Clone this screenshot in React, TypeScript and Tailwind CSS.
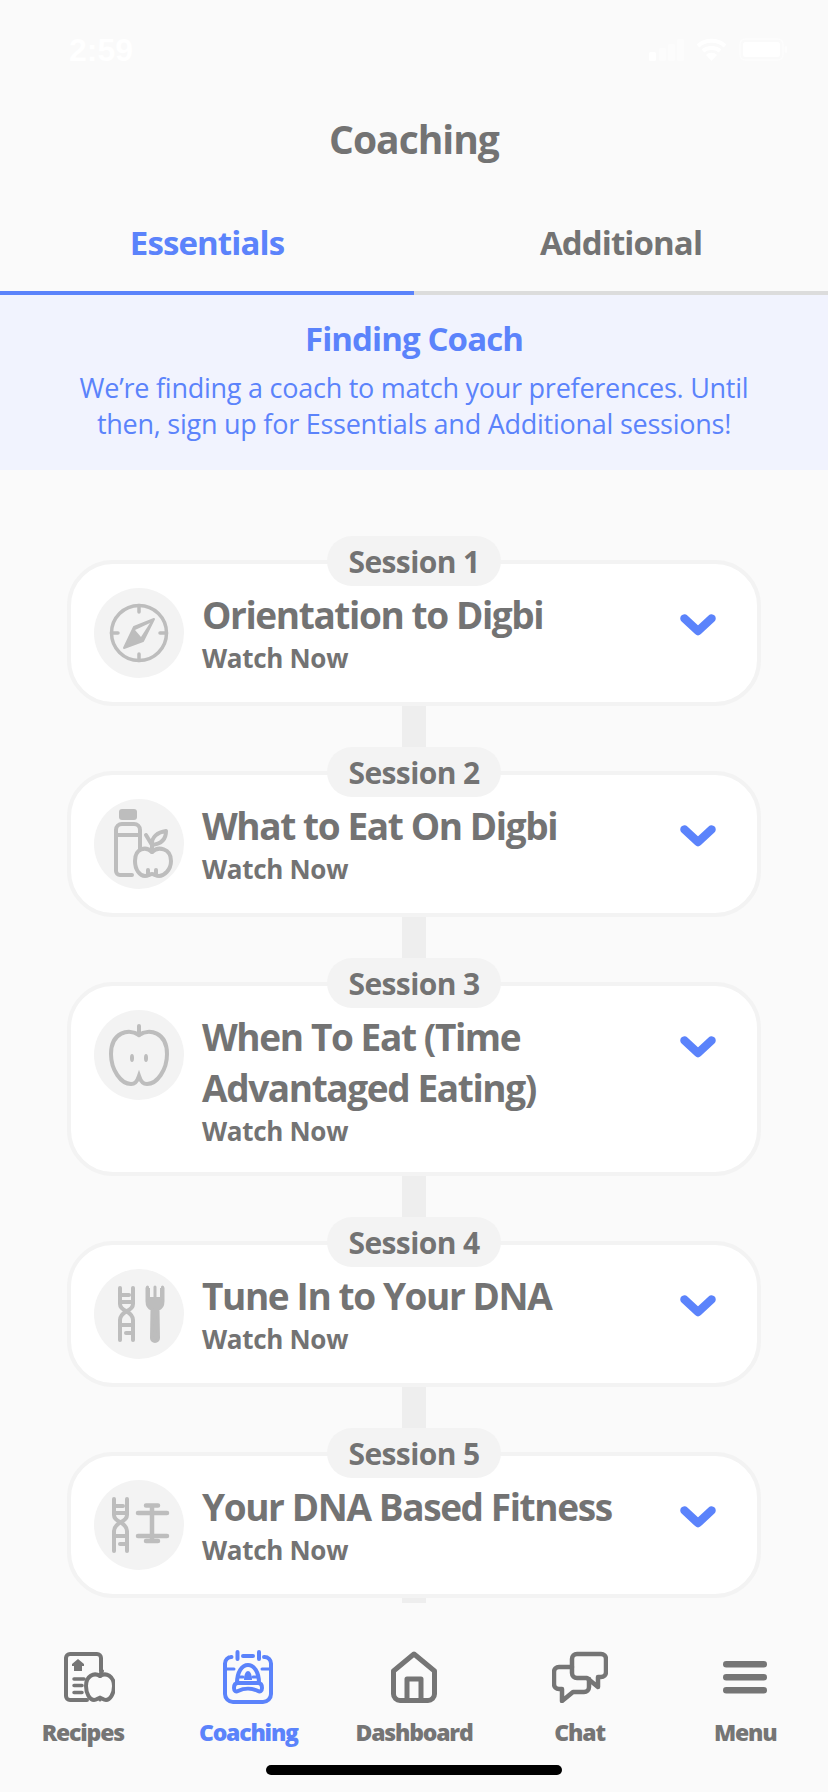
import React from 'react';

const Compass = () => (
  <svg width="90" height="90" viewBox="0 0 90 90" fill="none" stroke="#bdbdbd" strokeWidth="3.5" strokeLinecap="round">
    <circle cx="45" cy="45" r="27.5" />
    <path d="M45 17.5V24M45 66V72.5M17.5 45H24M66 45H72.5" />
    <path d="M60 31L49 53L30 60L40 39Z" fill="#bdbdbd" stroke="#bdbdbd" strokeWidth="2" strokeLinejoin="round" />
    <path d="M56 35L41 42L47 49Z" fill="#f3f3f3" stroke="none" />
  </svg>
);

const BottleApple = () => (
  <svg width="90" height="90" viewBox="0 0 90 90" fill="none" stroke="#bdbdbd" strokeWidth="4" strokeLinecap="round" strokeLinejoin="round">
    <rect x="25" y="10" width="18" height="11" rx="3" fill="#bdbdbd" stroke="none" />
    <path d="M38 76H26a4 4 0 0 1-4-4V31a6 6 0 0 1 6-6H40a6 6 0 0 1 6 6V50M22 36H46" />
    <path d="M58 53C52 47 41 49 41 62C41 71 46 77 51 77C54 77 56 75 58 75C60 75 62 77 65 77C70 77 77 71 77 62C77 49 64 47 58 53Z" fill="#f3f3f3" />
    <path d="M58 53V46M54 71L54 76M62 71V76" />
    <path d="M58 46C57 38 64 33 72 32C72 40 67 45 58 46ZM58 46L52 36" />
  </svg>
);

const AppleHalf = () => (
  <svg width="90" height="90" viewBox="0 0 90 90" fill="none" stroke="#bdbdbd" strokeWidth="4" strokeLinecap="round">
    <path d="M45 25C35 18 17 22 17 44C17 60 27 74 37 74C41 74 43 72 45 66C47 72 49 74 53 74C63 74 73 60 73 44C73 22 55 18 45 25Z" />
    <path d="M45 25V16" strokeWidth="4" />
    <ellipse cx="38" cy="48" rx="2" ry="4" fill="#bdbdbd" stroke="none" />
    <ellipse cx="52" cy="48" rx="2" ry="4" fill="#bdbdbd" stroke="none" />
  </svg>
);

const Dna = ({ x }: { x: number }) => (
  <g transform={`translate(${x} 18)`} stroke="#bdbdbd" strokeWidth="4" strokeLinecap="round" fill="none">
    <path d="M2 1V17Q2 21 8 24Q15 28 15 33V53" />
    <path d="M15 1V17Q15 21 9 24Q2 28 2 33V53" />
    <path d="M2 8H11M2 15H15M2 38H15M8 46H15" />
  </g>
);

const DnaFork = () => (
  <svg width="90" height="90" viewBox="0 0 90 90" fill="none">
    <Dna x={24} />
    <path d="M53 19V32Q53 39 58 40L57.5 69a3.5 3.5 0 0 0 7 0L64 40Q69 39 69 32V19" stroke="#bdbdbd" strokeWidth="3" fill="#bdbdbd" strokeLinecap="round" />
    <path d="M56 18H66V28H56Z" fill="#f3f3f3" />
    <path d="M53.500 18V30M61 18V30M68.500 18V30" stroke="#bdbdbd" strokeWidth="3" strokeLinecap="round" />
  </svg>
);

const DnaDumbbell = () => (
  <svg width="90" height="90" viewBox="0 0 90 90" fill="none">
    <Dna x={18} />
    <path d="M44 33H73M44 56H73M52 25.500H64M52 61H64M58 25.500V61" stroke="#bdbdbd" strokeWidth="4.500" strokeLinecap="round" />
  </svg>
);

const RecipesIcon = () => (
  <svg width="64" height="52" viewBox="-12 0 64 52" fill="none" stroke="#757575" strokeWidth="4" strokeLinecap="round" strokeLinejoin="round">
    <path d="M24 49H7a4 4 0 0 1-4-4V7a4 4 0 0 1 4-4H34a4 4 0 0 1 4 4V20" />
    <path d="M15 8L21 13V15H19V20H11V15H9V13Z" fill="#757575" stroke="none" />
    <path d="M11 28H21M11 34.500H19M11 41.500H19" strokeWidth="3.500" />
    <path d="M37 25C31 21 23 25 23 35C23 43 27 49 31 49C34 49 35 47 37 47C39 47 40 49 43 49C47 49 51 43 51 35C51 25 43 21 37 25Z" fill="#fafafa" />
    <path d="M37 25L39 20" />
    <path d="M37 46V49" strokeWidth="3" />
  </svg>
);

const CoachingIcon = () => (
  <svg width="50" height="54" viewBox="0 0 50 54" fill="none" stroke="#5b83fb" strokeWidth="4" strokeLinecap="round" strokeLinejoin="round">
    <path d="M8 7H8.500A6.500 6.500 0 0 0 2 13.500V44a8 8 0 0 0 8 8H40a8 8 0 0 0 8-8V13.500A6.500 6.500 0 0 0 41.500 7H41" />
    <path d="M14.500 2V9M36 2V9M20 6H30" />
    <path d="M3 19H11M39 19H47" strokeWidth="3" />
    <path d="M14 33C14 22 19 15 25 15C31 15 36 22 36 33" />
    <path d="M21 30C21 24 23 21 25 21C27 21 29 24 29 30Z" fill="#5b83fb" stroke="none" />
    <path d="M15 33H35C38 33 39 35 39 38C39 41 37 42 35 41C29 38 21 38 15 41C13 42 11 41 11 38C11 35 12 33 15 33Z" />
    <path d="M15 27H20M30 27H35" strokeWidth="3" />
  </svg>
);

const HomeIcon = () => (
  <svg width="48" height="52" viewBox="0 0 48 52" fill="none" stroke="#757575" strokeWidth="5" strokeLinecap="round" strokeLinejoin="round">
    <path d="M24 3L3.500 20V43a6.500 6.500 0 0 0 6.500 6.500H38a6.500 6.500 0 0 0 6.500-6.500V20Z" />
    <path d="M17 49V28H31V49" />
  </svg>
);

const ChatIcon = () => (
  <svg width="56" height="52" viewBox="0 0 56 52" fill="none" stroke="#757575" strokeWidth="4.500" strokeLinecap="round" strokeLinejoin="round">
    <path d="M20 16H7a5 5 0 0 0-5 5V33a5 5 0 0 0 5 5H10V50L21 41H32a5 5 0 0 0 5-5V28" />
    <path d="M25 3H49a5 5 0 0 1 5 5V21a5 5 0 0 1-5 5H46V36L35 27H25a5 5 0 0 1-5-5V8a5 5 0 0 1 5-5Z" />
  </svg>
);

const MenuIcon = () => (
  <svg width="44" height="33" viewBox="0 0 44 33" fill="#757575">
    <rect x="0" y="0" width="44" height="6.500" rx="3.250" />
    <rect x="0" y="13" width="44" height="6.500" rx="3.250" />
    <rect x="0" y="26" width="44" height="6.500" rx="3.250" />
  </svg>
);

const Chevron = () => (
  <svg width="36" height="22" viewBox="0 0 36 22" fill="none" stroke="#5b83fb" strokeWidth="8.500" strokeLinecap="round" strokeLinejoin="round">
    <path d="M4.500 4.500L18 17L31.500 4.500" />
  </svg>
);

const sessions = [
  { title: 'Orientation to Digbi', Icon: Compass },
  { title: 'What to Eat On Digbi', Icon: BottleApple },
  { title: 'When To Eat (Time Advantaged Eating)', Icon: AppleHalf },
  { title: 'Tune In to Your DNA', Icon: DnaFork },
  { title: 'Your DNA Based Fitness', Icon: DnaDumbbell },
];

const navItems = [
  { label: 'Recipes', Icon: RecipesIcon },
  { label: 'Coaching', Icon: CoachingIcon, active: true },
  { label: 'Dashboard', Icon: HomeIcon },
  { label: 'Chat', Icon: ChatIcon },
  { label: 'Menu', Icon: MenuIcon },
];

export default function App() {
  return (
    <div className="h-[1792px] w-[828px] flex flex-col overflow-hidden bg-[#fafafa] font-['Open_Sans',sans-serif] text-[#737373]">
      {/* status bar is white on near white in the shot */}
      <div className="h-[100px] shrink-0 flex justify-between items-start pt-[30px] pl-[69px] pr-[41px] text-white">
        <span className="text-[32px] leading-[40px] font-semibold font-['Liberation_Sans',sans-serif]">2:59</span>
        <div className="flex items-center gap-[12px] pt-[8px]">
          <svg width="35" height="22" viewBox="0 0 35 22" fill="#fff">
            <rect x="0" y="13" width="7" height="9" rx="1.500" />
            <rect x="10" y="9" width="7" height="13" rx="1.500" opacity="0.4" />
            <rect x="19" y="5" width="7" height="17" rx="1.500" opacity="0.4" />
            <rect x="28" y="0" width="7" height="22" rx="1.500" opacity="0.4" />
          </svg>
          <svg width="31" height="23" viewBox="0 0 31 23" fill="none" stroke="#fff" strokeWidth="4">
            <path d="M2 8C9 1 22 1 29 8M7 13C11 9 20 9 24 13" />
            <path d="M10 17L15.500 23L21 17C18 14 13 14 10 17Z" fill="#fff" stroke="none" />
          </svg>
          <svg width="48" height="23" viewBox="0 0 48 23" fill="none">
            <rect x="1" y="1" width="43" height="21" rx="5" stroke="#fff" strokeWidth="1.500" opacity="0.5" />
            <rect x="4" y="4" width="37" height="15" rx="2.500" fill="#fff" />
            <rect x="45.500" y="8" width="2.500" height="7" rx="1" fill="#fff" opacity="0.5" />
          </svg>
        </div>
      </div>

      <h1 className="h-[78px] mb-[8px] shrink-0 flex items-center justify-center text-[39px] font-bold tracking-[-1px]">Coaching</h1>

      <div className="grid grid-cols-2 shrink-0 text-[33px] leading-[50px] font-bold tracking-[-0.9px]">
        <div className="h-[109px] pt-[32px] text-center text-[#5b83fb] border-b-4 border-[#5b83fb]">Essentials</div>
        <div className="h-[109px] pt-[32px] text-center border-b-4 border-[#dcdcdc]">Additional</div>
      </div>

      <div className="h-[175px] shrink-0 bg-[#f1f3fe] pt-[22px] text-center text-[#5b83fb]">
        <h2 className="text-[33px] leading-[44px] font-bold tracking-[-0.9px]">Finding Coach</h2>
        <p className="mt-[9px] text-[27px] leading-[36px] font-medium tracking-[-0.25px]">
          We’re finding a coach to match your preferences. Until
          <br />
          then, sign up for Essentials and Additional sessions!
        </p>
      </div>

      <div className="flex-1 min-h-0 overflow-hidden pt-[66px] flex flex-col items-center">
        {sessions.map(({ title, Icon }, i) => (
          <div key={title} className="flex flex-col items-center w-[694px]">
            <div className="relative z-10 h-[50px] w-[174px] -mb-[26px] rounded-full bg-[#f3f3f3] flex items-center justify-center text-[30px] font-bold tracking-[-0.6px]">
              Session {i + 1}
            </div>
            <div className="w-full min-h-[146px] rounded-[46px] border-4 border-[#f3f3f3] bg-white flex pt-[24px] pb-[23px] pl-[23px] pr-[41px]">
              <div className="w-[90px] h-[90px] shrink-0 rounded-full bg-[#f3f3f3]">
                <Icon />
              </div>
              <div className="flex-1 pt-[1px] pl-[18px]">
                <div className="text-[37px] leading-[51px] font-bold tracking-[-1.4px]">{title}</div>
                <div className="text-[26px] leading-[36px] font-bold tracking-[-0.3px]">Watch Now</div>
              </div>
              <div className="shrink-0 pt-[26px]">
                <Chevron />
              </div>
            </div>
            <div className="w-[24px] h-[41px] bg-[#eeeeee]" />
          </div>
        ))}
      </div>

      <nav className="shrink-0 bg-[#fafafa] pt-[47px] pb-[17px] flex flex-col items-center">
        <div className="grid grid-cols-5 w-full">
          {navItems.map(({ label, Icon, active }) => (
            <div key={label} className={`flex flex-col items-center ${active ? 'text-[#5b83fb]' : 'text-[#757575]'}`}>
              <div className="h-[54px] flex items-center justify-center">
                <Icon />
              </div>
              <span className="mt-[12px] text-[23px] leading-[32px] font-extrabold tracking-[-1.2px]">{label}</span>
            </div>
          ))}
        </div>
        <div className="mt-[17px] w-[296px] h-[10px] rounded-full bg-black" />
      </nav>
    </div>
  );
}
